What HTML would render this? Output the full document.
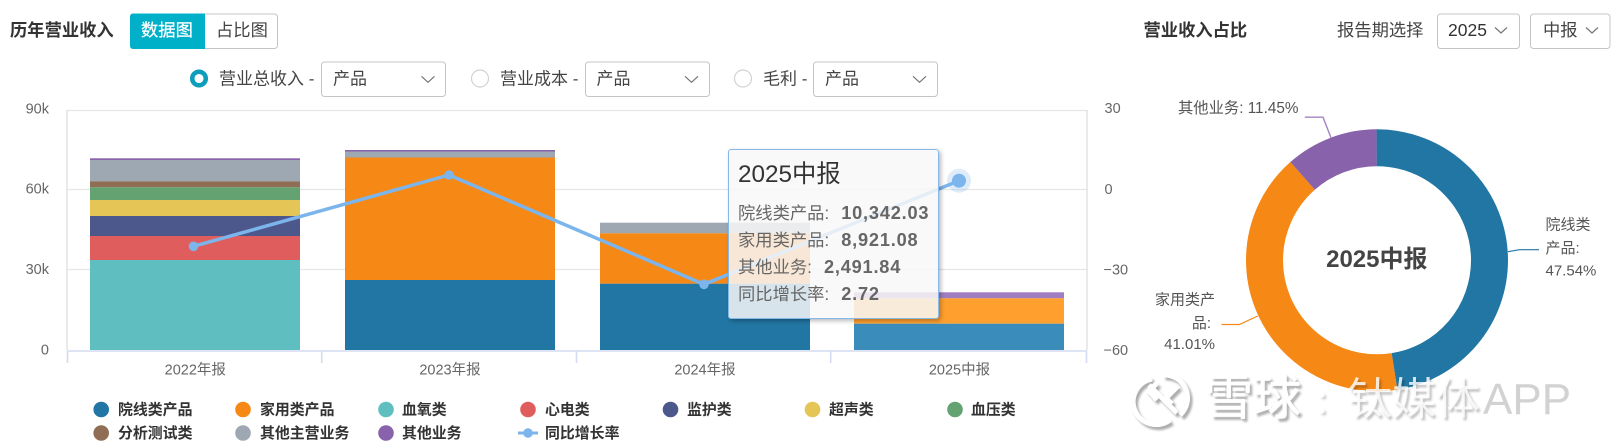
<!DOCTYPE html>
<html><head><meta charset="utf-8"><style>
html,body{margin:0;padding:0;background:#fff;width:1616px;height:448px;overflow:hidden}
svg{position:absolute;left:0;top:0}
text{font-family:"Liberation Sans","Noto Sans CJK SC",sans-serif}
.t{font-size:17.3px;fill:#444}
.r{font-size:17px;fill:#444}
.b{font-size:17.3px;font-weight:700;fill:#333}
.y{font-size:14.5px;fill:#666}
.x{font-size:14.5px;fill:#666}
.lg{font-size:14.9px;font-weight:700;fill:#333}
.pl{font-size:15px;fill:#555}
#tip{position:absolute;left:727.5px;top:149px;width:209.5px;height:168px;background:rgba(248,248,248,.85);border:1.5px solid #85b9e9;border-radius:3px;box-shadow:2px 2px 4px rgba(0,0,0,.28);font-family:"Liberation Sans","Noto Sans CJK SC",sans-serif;color:#666}
#tip div{position:absolute;left:9.5px;white-space:nowrap;font-size:17.3px;line-height:27px;height:27px}
#tip b{font-size:18.2px;letter-spacing:.8px;margin-left:12px;color:#666}
</style></head><body>
<svg width="1616" height="448" viewBox="0 0 1616 448" xmlns="http://www.w3.org/2000/svg">
<!-- header -->
<text x="10" y="36" class="b">历年营业收入</text>
<rect x="130.500" y="14" width="147" height="34.500" rx="3" fill="#fff" stroke="#c4c4c4"/>
<path d="M133 13.500h72v35.500h-72a3 3 0 0 1-3-3v-29.500a3 3 0 0 1 3-3z" fill="#00b0c9"/>
<text x="141" y="36" font-size="17.300" fill="#fff" stroke="#fff" stroke-width=".25">数据图</text>
<text x="216" y="36" class="t">占比图</text>
<!-- radios -->
<circle cx="199" cy="78.500" r="6.800" fill="#fff" stroke="#0e9dbb" stroke-width="4.500"/>
<text x="219" y="84.500" class="r">营业总收入 -</text>
<rect x="321.500" y="62" width="124" height="34.500" rx="3" fill="#fff" stroke="#c4c4c4"/>
<text x="333" y="84.500" class="r">产品</text>
<path d="M421.500 76.300l6.500 6 6.500-6" fill="none" stroke="#777" stroke-width="1.200"/>
<circle cx="480" cy="78.500" r="8.500" fill="#fff" stroke="#d2d2d2" stroke-width="1.200"/>
<text x="500" y="84.500" class="r">营业成本 -</text>
<rect x="585.500" y="62" width="124" height="34.500" rx="3" fill="#fff" stroke="#c4c4c4"/>
<text x="596.500" y="84.500" class="r">产品</text>
<path d="M685 76.300l6.500 6 6.500-6" fill="none" stroke="#777" stroke-width="1.200"/>
<circle cx="743" cy="78.500" r="8.500" fill="#fff" stroke="#d2d2d2" stroke-width="1.200"/>
<text x="763" y="84.500" class="r">毛利 -</text>
<rect x="813.500" y="62" width="124" height="34.500" rx="3" fill="#fff" stroke="#c4c4c4"/>
<text x="825" y="84.500" class="r">产品</text>
<path d="M913 76.300l6.500 6 6.500-6" fill="none" stroke="#777" stroke-width="1.200"/>
<!-- right header -->
<text x="1143.500" y="36" class="b">营业收入占比</text>
<text x="1337" y="36" class="t">报告期选择</text>
<rect x="1437.500" y="14" width="82" height="34.500" rx="3" fill="#fff" stroke="#c4c4c4"/>
<text x="1448" y="36" font-size="17.500" fill="#333">2025</text>
<path d="M1495 27.500l6 5.500 6-5.500" fill="none" stroke="#777" stroke-width="1.200"/>
<rect x="1530.500" y="14" width="79.500" height="34.500" rx="3" fill="#fff" stroke="#c4c4c4"/>
<text x="1543" y="36" class="t">中报</text>
<path d="M1586 27.500l6 5.500 6-5.500" fill="none" stroke="#777" stroke-width="1.200"/>
<!-- grid -->
<path d="M67 110.500H1087M67 189.500H1087M67 269.500H1087" stroke="#e6e6e6" stroke-width="1.300" fill="none"/>
<path d="M67 110V350M1087 110V350" stroke="#dedede" stroke-width="1.300" fill="none"/>
<g>
<text x="49" y="113.500" text-anchor="end" class="y">90k</text>
<text x="49" y="193.500" text-anchor="end" class="y">60k</text>
<text x="49" y="274" text-anchor="end" class="y">30k</text>
<text x="49" y="354.500" text-anchor="end" class="y">0</text>
<text x="1104.500" y="113" class="y">30</text>
<text x="1104.500" y="194" class="y">0</text>
<text x="1103.500" y="274.500" class="y">−30</text>
<text x="1103.500" y="355" class="y">−60</text>
</g>
<!-- bars 2022 -->
<rect x="90" y="158.300" width="210" height="1.700" fill="#8862aa"/>
<rect x="90" y="160" width="210" height="21.300" fill="#9da8b3"/>
<rect x="90" y="181.300" width="210" height="6" fill="#8f6e55"/>
<rect x="90" y="187.300" width="210" height="12.700" fill="#64a272"/>
<rect x="90" y="200" width="210" height="16" fill="#e4c555"/>
<rect x="90" y="216" width="210" height="20" fill="#4c578c"/>
<rect x="90" y="236" width="210" height="24" fill="#e05d5d"/>
<rect x="90" y="260" width="210" height="90" fill="#5fbfc0"/>
<!-- 2023 -->
<rect x="345" y="150" width="210" height="1.500" fill="#8862aa"/>
<rect x="345" y="151.500" width="210" height="6" fill="#9da8b3"/>
<rect x="345" y="157.500" width="210" height="122.500" fill="#f68815"/>
<rect x="345" y="280" width="210" height="70" fill="#2276a3"/>
<!-- 2024 -->
<rect x="600" y="222.700" width="210" height="10.600" fill="#9da8b3"/>
<rect x="600" y="233.300" width="210" height="50.400" fill="#f68815"/>
<rect x="600" y="283.700" width="210" height="66.300" fill="#2276a3"/>
<!-- 2025 -->
<rect x="854" y="292.300" width="210" height="6" fill="#a07cc0"/>
<rect x="854" y="298.300" width="210" height="25.400" fill="#ff9f2e"/>
<rect x="854" y="323.700" width="210" height="26.300" fill="#3a8dba"/>
<!-- axis -->
<path d="M67 351H1087M67.500 351V363M321.700 351V363M576.500 351V363M830.700 351V363M1086.500 351V363" stroke="#d3dcf0" stroke-width="1.600" fill="none"/>
<text x="195.300" y="374.500" text-anchor="middle" class="x">2022年报</text>
<text x="450" y="374.500" text-anchor="middle" class="x">2023年报</text>
<text x="705" y="374.500" text-anchor="middle" class="x">2024年报</text>
<text x="959.500" y="374.500" text-anchor="middle" class="x">2025中报</text>
<!-- line -->
<polyline points="193.500,246.300 449,175 704,284.300 959,180.700" fill="none" stroke="#7cb5ec" stroke-width="3.500"/>
<circle cx="193.500" cy="246.300" r="4.800" fill="#7cb5ec"/>
<circle cx="449" cy="175" r="4.800" fill="#7cb5ec"/>
<circle cx="704" cy="284.300" r="4.800" fill="#7cb5ec"/>
<circle cx="959" cy="180.700" r="12" fill="#7cb5ec" fill-opacity=".25"/>
<circle cx="959" cy="180.700" r="7" fill="#7cb5ec"/>
<!-- legend -->
<circle cx="101.200" cy="409.500" r="7.800" fill="#2276a3"/><text x="118" y="414.500" class="lg">院线类产品</text>
<circle cx="243" cy="409.500" r="7.800" fill="#f68815"/><text x="260" y="414.500" class="lg">家用类产品</text>
<circle cx="386" cy="409.500" r="7.800" fill="#5fbfc0"/><text x="402" y="414.500" class="lg">血氧类</text>
<circle cx="528" cy="409.500" r="7.800" fill="#e05d5d"/><text x="545" y="414.500" class="lg">心电类</text>
<circle cx="670.500" cy="409.500" r="7.800" fill="#4c578c"/><text x="687" y="414.500" class="lg">监护类</text>
<circle cx="812.500" cy="409.500" r="7.800" fill="#e4c555"/><text x="829" y="414.500" class="lg">超声类</text>
<circle cx="955" cy="409.500" r="7.800" fill="#64a272"/><text x="971" y="414.500" class="lg">血压类</text>
<circle cx="101.200" cy="433" r="7.800" fill="#8f6e55"/><text x="118" y="438" class="lg">分析测试类</text>
<circle cx="243" cy="433" r="7.800" fill="#9da8b3"/><text x="260" y="438" class="lg">其他主营业务</text>
<circle cx="386" cy="433" r="7.800" fill="#8862aa"/><text x="402" y="438" class="lg">其他业务</text>
<path d="M518 433H538" stroke="#7cb5ec" stroke-width="3"/><circle cx="528" cy="433" r="4.800" fill="#7cb5ec"/>
<text x="545" y="438" class="lg">同比增长率</text>
<!-- donut -->
<g transform="rotate(-90 1377 260.300)" fill="none" stroke-width="37">
<circle cx="1377" cy="260.300" r="112.500" pathLength="100" stroke="#2276a3" stroke-dasharray="47.54 52.46"/>
<circle cx="1377" cy="260.300" r="112.500" pathLength="100" stroke="#f68815" stroke-dasharray="41.01 58.99" stroke-dashoffset="-47.54"/>
<circle cx="1377" cy="260.300" r="112.500" pathLength="100" stroke="#8862aa" stroke-dasharray="11.45 88.55" stroke-dashoffset="-88.55"/>
</g>
<text x="1376.800" y="267" text-anchor="middle" font-size="24" font-weight="700" fill="#444">2025中报</text>
<path d="M1508 251.700L1519.500 249.700H1539" fill="none" stroke="#2276a3" stroke-width="1.200"/>
<path d="M1257.800 316L1239.300 324.500H1221.500" fill="none" stroke="#f68815" stroke-width="1.200"/>
<path d="M1331 137.700L1323 117.200H1304.800" fill="none" stroke="#a283c0" stroke-width="1.400"/>
<text x="1178" y="113" class="pl" style="font-size:15.300px">其他业务: 11.45%</text>
<text x="1545.500" y="229.500" class="pl">院线类</text>
<text x="1545.500" y="253" class="pl">产品:</text>
<text x="1545.500" y="275.500" class="pl">47.54%</text>
<text x="1215" y="304.500" text-anchor="end" class="pl">家用类产</text>
<text x="1211" y="328" text-anchor="end" class="pl">品:</text>
<text x="1215" y="349" text-anchor="end" class="pl">41.01%</text>
<!-- watermark -->
<defs><filter id="ws" x="-20%" y="-20%" width="140%" height="140%"><feGaussianBlur stdDeviation="1.100"/></filter>
<g id="lg"><path d="M1152 379A23 23 0 1 0 1170 420"/><path d="M1163 375A23 23 0 0 1 1180 415"/><path d="M1149 385L1177 413"/><path d="M1157 383L1149 391L1157 400"/><path d="M1178 386L1166 398L1172 404"/></g></defs>
<use href="#lg" transform="translate(2.500 3)" fill="none" stroke="#000" stroke-opacity=".32" stroke-width="5" filter="url(#ws)"/>
<use href="#lg" fill="none" stroke="#fff" stroke-width="5"/>
<g font-family="Liberation Sans,Noto Sans CJK SC,sans-serif">
<text x="1207.500" y="417" font-size="48" fill="#000" fill-opacity=".3" filter="url(#ws)" stroke="#000" stroke-opacity=".2" stroke-width=".8">雪球</text>
<text x="1205" y="414" font-size="48" fill="#fff" stroke="#fff" stroke-width=".8">雪球</text>
<text x="1316" y="415" font-size="32" fill="#000" fill-opacity=".2" filter="url(#ws)">：</text>
<text x="1314" y="413" font-size="32" fill="#fff">：</text>
<text x="1350" y="416.500" font-size="44" fill="#000" fill-opacity=".25" filter="url(#ws)">钛媒体</text>
<text x="1348" y="414" font-size="44" fill="#fff" fill-opacity=".82">钛媒体</text>
<text x="1483" y="414" font-size="44" fill="#cdcdcd" fill-opacity=".9">APP</text>
</g>
</svg>
<div id="tip">
<div style="top:10px;font-size:24.3px;line-height:30px;color:#333">2025中报</div>
<div style="top:50px">院线类产品:<b>10,342.03</b></div>
<div style="top:77px">家用类产品:<b>8,921.08</b></div>
<div style="top:104px">其他业务:<b>2,491.84</b></div>
<div style="top:131px">同比增长率:<b>2.72</b></div>
</div>
</body></html>
